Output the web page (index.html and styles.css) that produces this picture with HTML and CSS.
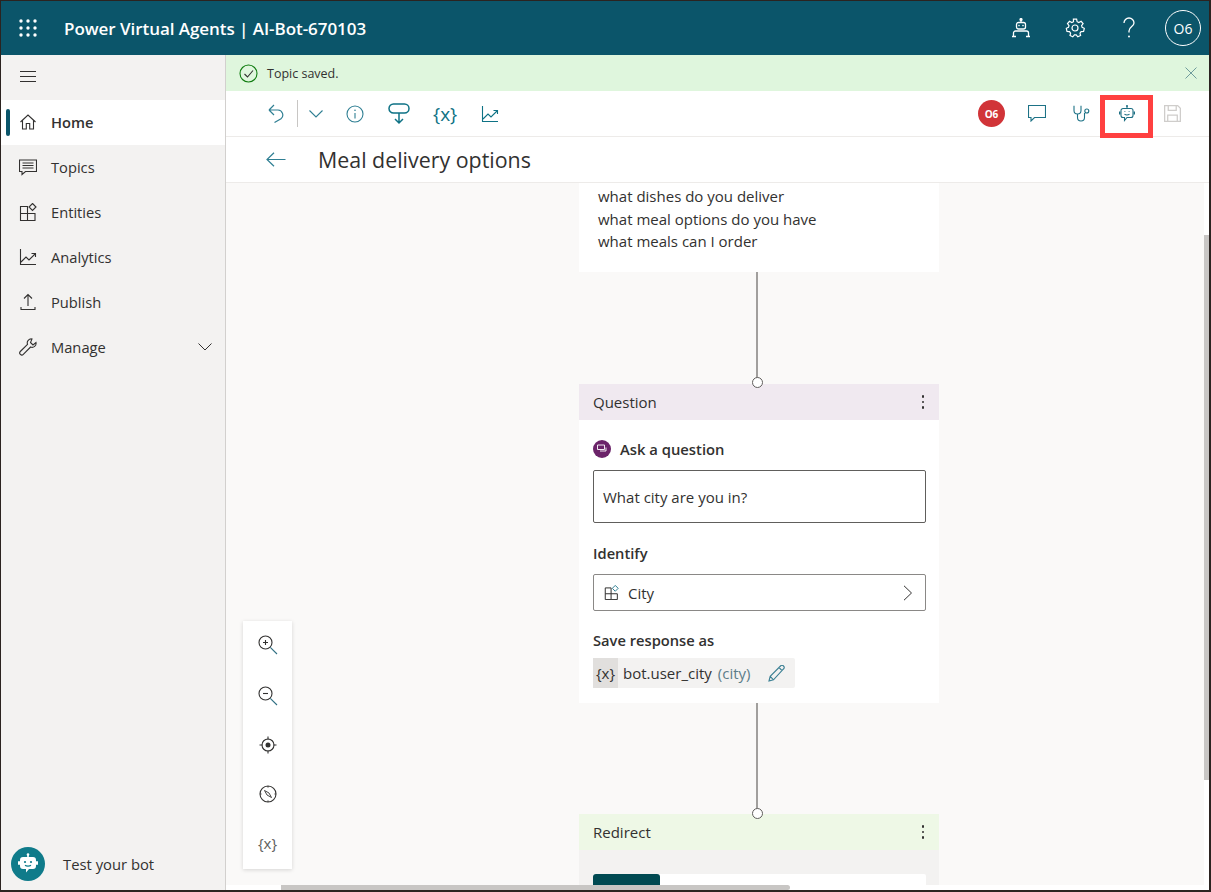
FILE: index.html
```html
<!DOCTYPE html>
<html lang="en">
<head>
  <meta charset="UTF-8" />
  <title>Power Virtual Agents | AI-Bot-670103</title>
  <link rel="stylesheet" href="styles.css">
</head>
<body>
  <div class="app">
    <header class="topbar">
      <svg class="waffle" width="18" height="18" viewBox="0 0 18 18" fill="#fff">
        <circle cx="2" cy="2" r="1.7"/><circle cx="9" cy="2" r="1.7"/><circle cx="16" cy="2" r="1.7"/>
        <circle cx="2" cy="9" r="1.7"/><circle cx="9" cy="9" r="1.7"/><circle cx="16" cy="9" r="1.7"/>
        <circle cx="2" cy="16" r="1.7"/><circle cx="9" cy="16" r="1.7"/><circle cx="16" cy="16" r="1.7"/>
      </svg>
      <div class="appTitle">Power Virtual Agents | AI-Bot-670103</div>
      <div class="topActions">
        <div class="topBtn">
          <svg width="20" height="20" viewBox="0 0 20 20" fill="none" stroke="#fff" stroke-width="1.3">
            <path d="M10 1v3"/><circle cx="10" cy="1.6" r="1" fill="#fff"/>
            <rect x="5.500" y="4.500" width="9" height="6.500" rx="2"/>
            <circle cx="8" cy="7.600" r=".8" fill="#fff" stroke="none"/><circle cx="12" cy="7.600" r=".8" fill="#fff" stroke="none"/>
            <path d="M2.500 18.500v-3.500a2 2 0 0 1 2-2h11a2 2 0 0 1 2 2v3.500M1 18.500h4M15 18.500h4"/>
          </svg>
        </div>
        <div class="topBtn">
          <svg width="20" height="20" viewBox="0 0 20 20" fill="none" stroke="#fff" stroke-width="1.2">
            <path d="M8.400 1.500h3.200l.5 2.500 1.700.8 2.300-1.200 2 2.300-1.500 2 .5 1.800 2.200.9v.1l-.7 3-2.500.2-1.100 1.500.6 2.400-2.800 1.300-1.600-1.900h-1.800l-1.600 1.900-2.800-1.300.6-2.400-1.100-1.500-2.500-.2-.7-3v-.1l2.200-.9.500-1.800-1.500-2 2-2.300 2.300 1.200 1.700-.8z" transform="translate(0 -.3)"/>
            <circle cx="10" cy="10" r="3"/>
          </svg>
        </div>
        <div class="topBtn">
          <svg width="14" height="22" viewBox="0 0 14 22" fill="none" stroke="#fff" stroke-width="1.3">
            <path d="M2 6a5 5 0 0 1 10 0c0 3.500-5 3.800-5 8v1.500"/><circle cx="7" cy="19.500" r="1" fill="#fff" stroke="none"/>
          </svg>
        </div>
        <div class="topBtn avatarSlot"><div class="avatar">O6</div></div>
      </div>
    </header>

    <div class="main">
      <nav class="sidebar">
        <div class="hamburger"><span></span><span></span><span></span></div>
        <a class="navItem active">
          <svg class="navIcon" width="18" height="18" viewBox="0 0 18 18" fill="none" stroke="#323130" stroke-width="1.100"><path d="M1.500 9 9 2l7.500 7M3.500 7.500V16h3.800v-5.500h3.400V16h3.800V7.500"/></svg>
          <span>Home</span>
        </a>
        <a class="navItem">
          <svg class="navIcon" width="18" height="18" viewBox="0 0 18 18" fill="none" stroke="#323130" stroke-width="1.100"><path d="M.5 2h17v11.500H6.500L3 16.500v-3H.5z"/><path d="M3.500 5h11M3.500 7.500h11M3.500 10h11"/></svg>
          <span>Topics</span>
        </a>
        <a class="navItem">
          <svg class="navIcon" width="18" height="18" viewBox="0 0 18 18" fill="none" stroke="#323130" stroke-width="1.100"><path d="M1.500 3.500h7v14h-7zM1.500 10.500h14.500v7H8.500"/><path d="M13.500.5l3.500 3.500-3.500 3.500L10 4z"/></svg>
          <span>Entities</span>
        </a>
        <a class="navItem">
          <svg class="navIcon" width="18" height="18" viewBox="0 0 18 18" fill="none" stroke="#323130" stroke-width="1.100"><path d="M1.500 1v15.500H17M2 14l5-5 3 3 6-6M12.500 5.500H16.500V9"/></svg>
          <span>Analytics</span>
        </a>
        <a class="navItem">
          <svg class="navIcon" width="18" height="18" viewBox="0 0 18 18" fill="none" stroke="#323130" stroke-width="1.100"><path d="M9 13V1.500M5 5.500l4-4 4 4M2 14v2.500h14V14"/></svg>
          <span>Publish</span>
        </a>
        <a class="navItem">
          <svg class="navIcon" width="18" height="18" viewBox="0 0 18 18" fill="none" stroke="#323130" stroke-width="1.100"><path d="M13 1a4 4 0 0 0-4.500 5.300L1.300 13.500a2 2 0 0 0 3 2.800l7.300-7.300A4 4 0 0 0 17 4.500l-3 2.500-2.500-2.500z"/></svg>
          <span>Manage</span>
          <svg class="navChevron" width="14" height="8" viewBox="0 0 14 8" fill="none" stroke="#323130" stroke-width="1"><path d="M.5.500 7 7l6.500-6.500"/></svg>
        </a>
        <div class="testBot">
          <div class="testBotIcon">
            <svg width="20" height="22" viewBox="0 0 20 22" fill="#fff">
              <rect x="9.200" y="1" width="1.600" height="3"/><circle cx="10" cy="1.500" r="1.300"/>
              <path d="M5 4h10a3 3 0 0 1 3 3v6a3 3 0 0 1-3 3h-4l-3 3.500V16H5a3 3 0 0 1-3-3V7a3 3 0 0 1 3-3z"/>
              <rect x="0" y="8" width="2" height="4" rx="1"/><rect x="18" y="8" width="2" height="4" rx="1"/>
              <circle cx="7" cy="9" r="1.100" fill="#0f7b8a"/><circle cx="13" cy="9" r="1.100" fill="#0f7b8a"/>
              <path d="M7 12.200c1.500 1.200 4.500 1.200 6 0" fill="none" stroke="#0f7b8a" stroke-width="1.100"/>
            </svg>
          </div>
          <span>Test your bot</span>
        </div>
      </nav>

      <section class="content">
        <div class="notice">
          <svg width="19" height="19" viewBox="0 0 19 19" fill="none" stroke-width="1.100"><circle cx="9.500" cy="9.500" r="8.500" stroke="#107c10"/><path d="M5.500 10l3 3 5.500-6.500" stroke="#323130"/></svg>
          <span class="noticeText">Topic saved.</span>
          <svg class="noticeClose" width="12" height="12" viewBox="0 0 12 12" stroke="#6f9c9c" stroke-width="1"><path d="M.5.500l11 11M11.500.500l-11 11"/></svg>
        </div>

        <div class="toolbar">
          <svg class="tool undo" width="16" height="19" viewBox="0 0 16 19" fill="none" stroke="#2f7f93" stroke-width="1.200"><path d="M1 6h9a5 5 0 0 1 3 8.800L6.500 18.500M1 6l5-5M1 6l5 5"/></svg>
          <div class="toolDivider"></div>
          <svg class="tool chev" width="14" height="8" viewBox="0 0 14 8" fill="none" stroke="#2f7f93" stroke-width="1.100"><path d="M.5.500 7 7l6.500-6.500"/></svg>
          <svg class="tool info" width="18" height="18" viewBox="0 0 18 18" fill="none" stroke="#2f7f93" stroke-width="1.100"><circle cx="9" cy="9" r="8"/><path d="M9 8v5.500"/><circle cx="9" cy="5.300" r=".8" fill="#2f7f93" stroke="none"/></svg>
          <svg class="tool branch" width="22" height="22" viewBox="0 0 22 22" fill="none" stroke="#0e7285" stroke-width="1.500"><rect x="1" y="1" width="20" height="9" rx="4.500"/><path d="M11 10v10M7 16l4 4 4-4"/></svg>
          <div class="tool vars">{x}</div>
          <svg class="tool chart" width="18" height="18" viewBox="0 0 18 18" fill="none" stroke="#0e7285" stroke-width="1.100"><path d="M1.500 1v15.500H17M2 14l5-5 3 3 6-6M12.500 5.500H16.500V9"/></svg>

          <div class="toolRight">
            <div class="badge">O6</div>
            <svg class="tool comment" width="18" height="17" viewBox="0 0 18 17" fill="none" stroke="#1d7286" stroke-width="1.100"><path d="M.5.500h17v12H6.500L3 16v-3.500H.5z"/></svg>
            <svg class="tool steth" width="17" height="17" viewBox="0 0 17 17" fill="none" stroke="#1d7286" stroke-width="1.100"><path d="M1 .8v4.700a3.500 3.500 0 0 0 7 0V.8M4.500 9v3.500a3.500 3.500 0 0 0 7 0V8"/><circle cx="13.800" cy="6" r="2"/></svg>
            <div class="testBtn">
              <svg width="16" height="18" viewBox="0 0 16 18" fill="none" stroke="#1d6f83" stroke-width="1.100"><path d="M8 .5v3"/><circle cx="8" cy="1" r=".9" fill="#1d6f83" stroke="none"/><path d="M4 3.500h8a2 2 0 0 1 2 2v5a2 2 0 0 1-2 2H8l-2.500 3v-3H4a2 2 0 0 1-2-2v-5a2 2 0 0 1 2-2z"/><path d="M.7 6.500v3M15.300 6.500v3" stroke-width="1.500"/><path d="M5.500 6.500h.8M9.700 6.500h.8M5.500 9.300c1.500.8 3.500.8 5 0"/></svg>
            </div>
            <svg class="tool save" width="17" height="17" viewBox="0 0 16 16" fill="none" stroke="#cfcdcb" stroke-width="1.200"><path d="M.6.600h12.300l2.500 2.500v12.300H.6z"/><path d="M4 .6v4.500h7.500V.6M3.500 15.400V9.500h9v5.900"/></svg>
          </div>
        </div>

        <div class="titleBar">
          <svg class="backArrow" width="20" height="15" viewBox="0 0 20 15" fill="none" stroke="#2f7f93" stroke-width="1.200"><path d="M19.500 7.500H1M8 .7 1 7.500l7 6.800"/></svg>
          <h1>Meal delivery options</h1>
        </div>

        <div class="canvas">
          <div class="node triggerNode">
            <div>what dishes do you deliver</div>
            <div>what meal options do you have</div>
            <div>what meals can I order</div>
          </div>

          <div class="link linkOne"></div>
          <div class="port portOne"></div>

          <div class="node questionNode">
            <div class="nodeHead questionHead">
              <span>Question</span>
              <div class="kebab"><i></i><i></i><i></i></div>
            </div>
            <div class="nodeBody">
              <div class="askRow">
                <div class="askIcon">
                  <svg width="10" height="10" viewBox="0 0 10 10" fill="none" stroke="#fff" stroke-width=".9"><path d="M.5 1h7v4.500h-7zM3 7h6V3.500"/></svg>
                </div>
                <span>Ask a question</span>
              </div>
              <div class="questionBox">What city are you in?</div>
              <div class="fieldLabel identifyLabel">Identify</div>
              <div class="selectBox">
                <svg width="15" height="15" viewBox="0 0 18 18" fill="none" stroke="#323130" stroke-width="1.200"><path d="M1.500 3.500h7v14h-7zM1.500 10.500h14.500v7H8.500"/><path d="M13.500.5l3.500 3.500-3.500 3.500L10 4z" stroke="#2f7f93"/></svg>
                <span>City</span>
                <svg class="selectChev" width="10" height="16" viewBox="0 0 10 16" fill="none" stroke="#323130" stroke-width="1"><path d="M1 .8 8.500 8 1 15.200"/></svg>
              </div>
              <div class="fieldLabel saveLabel">Save response as</div>
              <div class="varChip">
                <div class="varTag">{x}</div>
                <span class="varName">bot.user_city</span>
                <span class="varType">(city)</span>
                <svg class="varEdit" width="17" height="17" viewBox="0 0 17 17" fill="none" stroke="#3a7f93" stroke-width="1.100"><path d="M1 16l1.200-4.700L12.500 1a1.900 1.900 0 0 1 3 3L5.500 14.800zM2.200 11.300l3.300 3.500M11 2.500l3.300 3.300"/></svg>
              </div>
            </div>
          </div>

          <div class="link linkTwo"></div>
          <div class="port portTwo"></div>

          <div class="node redirectNode">
            <div class="nodeHead redirectHead">
              <span>Redirect</span>
              <div class="kebab"><i></i><i></i><i></i></div>
            </div>
            <div class="redirectBody">
              <div class="redirectBox"><div class="redirectTag"></div></div>
            </div>
          </div>

          <div class="zoomPanel">
            <svg width="20" height="20" viewBox="0 0 20 20" fill="none" stroke="#323130" stroke-width="1.100"><circle cx="7.500" cy="7.500" r="6.500"/><path d="M5 7.500h5M7.500 5v5"/><path d="M12.300 12.300l6.700 6.700" stroke="#2f6f83"/></svg>
            <svg width="20" height="20" viewBox="0 0 20 20" fill="none" stroke="#323130" stroke-width="1.100"><circle cx="7.500" cy="7.500" r="6.500"/><path d="M5 7.500h5"/><path d="M12.300 12.300l6.700 6.700" stroke="#2f6f83"/></svg>
            <svg width="18" height="18" viewBox="0 0 18 18" fill="none" stroke="#323130" stroke-width="1.100"><circle cx="9" cy="9" r="6"/><circle cx="9" cy="9" r="2.500" fill="#323130" stroke="none"/><path d="M9 .5v3M9 14.500v3M.5 9h3M14.500 9h3"/></svg>
            <svg width="18" height="18" viewBox="0 0 18 18" fill="none" stroke="#323130" stroke-width="1.100"><circle cx="9" cy="9" r="8"/><path d="M5.500 5.500 8 10l4.500 2.500L10 8z" stroke-width=".9"/><path d="M9 1v1.500M9 15.500V17M1 9h1.500M15.500 9H17"/></svg>
            <div class="zoomVars">{x}</div>
          </div>

          <div class="trackH"><div class="scrollH"></div></div>
          <div class="trackV"><div class="scrollV"></div></div>
        </div>
      </section>
    </div>
  </div>
</body>
</html>
```

FILE: styles.css
```css
/* Base */
* {
  box-sizing: border-box;
}

html,
body {
  margin: 0;
  height: 892px;
  overflow: hidden;
  background: #fff;
  color: #323130;
  font-family: "Open Sans", "Noto Sans", Arial, sans-serif;
  font-size: 15px;
}

.app {
  display: flex;
  flex-direction: column;
  width: 1211px;
  height: 892px;
  border-style: solid;
  border-color: #2b2320;
  border-width: 1px 2px 2px 1px;
}

/* Top bar */
.topbar {
  display: flex;
  align-items: center;
  flex: 0 0 54px;
  padding-left: 18px;
  background: #0b556a;
  color: #fff;
}

.appTitle {
  margin-left: 27px;
  font-size: 17px;
  font-weight: 600;
  letter-spacing: -0.05px;
  white-space: nowrap;
}

.topActions {
  display: flex;
  align-items: center;
  margin-left: auto;
}

.topBtn {
  display: flex;
  align-items: center;
  justify-content: center;
  width: 54px;
}

.avatarSlot {
  width: 52px;
  margin-left: 1px;
}

.avatar {
  display: flex;
  align-items: center;
  justify-content: center;
  width: 36px;
  height: 36px;
  border: 1px solid #fff;
  border-radius: 50%;
  font-size: 14px;
}

/* Sidebar */
.main {
  display: flex;
  flex: 1;
  min-height: 0;
}

.sidebar {
  display: flex;
  flex-direction: column;
  flex: 0 0 225px;
  background: #f3f2f1;
  border-right: 1px solid #d2d0ce;
}

.hamburger {
  display: flex;
  flex-direction: column;
  justify-content: center;
  gap: 4px;
  height: 45px;
  padding: 0 0 3px 19px;
}

.hamburger span {
  display: block;
  width: 16px;
  height: 1px;
  background: #323130;
}

.navItem {
  position: relative;
  display: flex;
  align-items: center;
  height: 45px;
  padding: 0 0 2px 18px;
  font-size: 14.700px;
}

.navItem.active {
  background: #fff;
  font-weight: 600;
}

.navItem.active::before {
  content: "";
  position: absolute;
  left: 5px;
  top: 9px;
  width: 4px;
  height: 27px;
  border-radius: 2px;
  background: #0b556a;
}

.navIcon {
  flex: none;
  margin-right: 14px;
}

.navChevron {
  margin-left: auto;
  margin-right: 13px;
}

.testBot {
  display: flex;
  align-items: center;
  gap: 18px;
  margin-top: auto;
  padding: 0 0 9px 10px;
  font-size: 14.800px;
}

.testBotIcon {
  display: flex;
  align-items: center;
  justify-content: center;
  width: 34px;
  height: 34px;
  border-radius: 50%;
  background: #0f7b8a;
}

/* Content column */
.content {
  display: flex;
  flex-direction: column;
  flex: 1;
  min-width: 0;
}

.notice {
  display: flex;
  align-items: center;
  flex: 0 0 36px;
  padding: 0 12px 0 13px;
  background: #dff6dd;
}

.noticeText {
  margin-left: 9px;
  font-size: 12.500px;
}

.noticeClose {
  margin-left: auto;
}

.toolbar {
  display: flex;
  align-items: center;
  flex: 0 0 46px;
  min-height: 0;
  padding: 0 28px 0 42px;
  border-bottom: 1px solid #edebe9;
}

.tool {
  flex: none;
}

.toolDivider {
  width: 1px;
  height: 27px;
  margin: 0 11px 0 13px;
  background: #c8c6c4;
}

.chev {
  margin-right: 23px;
}

.info {
  margin-right: 24px;
}

.branch {
  margin-right: 23px;
}

.vars {
  margin-right: 24px;
  color: #0e7285;
  font-size: 19px;
}

.toolRight {
  display: flex;
  align-items: center;
  margin-left: auto;
}

.badge {
  display: flex;
  align-items: center;
  justify-content: center;
  width: 27px;
  height: 27px;
  margin-right: 23px;
  border-radius: 50%;
  background: #d13438;
  color: #fff;
  font-size: 10px;
  font-weight: 700;
}

.comment {
  margin-right: 27px;
}

.steth {
  margin-right: 10px;
}

/* the red highlight sits a little low over the toolbar rule */
.testBtn {
  display: flex;
  align-items: center;
  justify-content: center;
  width: 53px;
  height: 43px;
  margin: 5px 11px 0 0;
  padding-bottom: 5px;
  border: 5px solid #ff4040;
}

.titleBar {
  display: flex;
  align-items: center;
  flex: 0 0 46px;
  padding-left: 40px;
  border-bottom: 1px solid #edebe9;
}

.titleBar h1 {
  margin: 0 0 0 32px;
  font-size: 21.400px;
  font-weight: 400;
}

/* Canvas: nodes sit at their own spot on the free canvas */
.canvas {
  position: relative;
  flex: 1;
  overflow: hidden;
  background: #faf9f8;
}

.node {
  position: absolute;
  left: 353px;
  width: 360px;
  background: #fff;
}

.triggerNode {
  top: 0;
  height: 89px;
  padding: 2px 19px 0;
  line-height: 22.500px;
}

.questionNode {
  top: 201px;
  height: 319px;
}

.redirectNode {
  top: 631px;
  height: 80px;
  overflow: hidden;
}

.link {
  position: absolute;
  left: 530px;
  width: 2px;
  background: #a19f9d;
}

.linkOne {
  top: 89px;
  height: 107px;
}

.linkTwo {
  top: 520px;
  height: 106px;
}

.port {
  position: absolute;
  z-index: 2;
  left: 526px;
  width: 11px;
  height: 11px;
  border: 1px solid #605e5c;
  border-radius: 50%;
  background: #fff;
}

.portOne {
  top: 194px;
}

.portTwo {
  top: 625px;
}

.nodeHead {
  display: flex;
  align-items: center;
  justify-content: space-between;
  height: 36px;
  padding: 0 15px 0 14px;
}

.questionHead {
  background: #f0e9f0;
}

.redirectHead {
  background: #eef8e6;
}

.kebab {
  display: flex;
  flex-direction: column;
  gap: 3px;
}

.kebab i {
  display: block;
  width: 2.500px;
  height: 2.500px;
  border-radius: 50%;
  background: #323130;
}

.nodeBody {
  padding: 19px 13px 0 14px;
  line-height: 20px;
}

.askRow {
  display: flex;
  align-items: center;
  gap: 9px;
  font-size: 14.800px;
  font-weight: 600;
}

.askIcon {
  display: flex;
  align-items: center;
  justify-content: center;
  width: 18px;
  height: 18px;
  border-radius: 50%;
  background: #6b2369;
}

.questionBox {
  display: flex;
  align-items: center;
  height: 53px;
  margin-top: 11px;
  padding-left: 9px;
  border: 1px solid #605e5c;
  border-radius: 2px;
}

.fieldLabel {
  font-size: 14.700px;
  font-weight: 600;
}

.identifyLabel {
  margin-top: 20px;
}

.selectBox {
  display: flex;
  align-items: center;
  gap: 9px;
  height: 37px;
  margin-top: 11px;
  padding: 0 12px 0 10px;
  border: 1px solid #8a8886;
  border-radius: 2px;
}

.selectChev {
  margin-left: auto;
}

.saveLabel {
  margin-top: 19px;
}

.varChip {
  display: flex;
  align-items: center;
  width: 202px;
  height: 30px;
  margin-top: 8px;
  border-radius: 2px;
  background: #f3f2f1;
}

.varTag {
  display: flex;
  align-items: center;
  justify-content: center;
  width: 25px;
  height: 30px;
  background: #e1dfdd;
}

.varName {
  margin-left: 5px;
}

.varType {
  margin-left: 6px;
  color: #5c7d8a;
}

.varEdit {
  margin-left: auto;
  margin-right: 10px;
}

.redirectBody {
  height: 100%;
  padding: 24px 13px 0 14px;
  background: #f3f2f1;
}

.redirectBox {
  height: 40px;
  border-radius: 2px;
  background: #fff;
}

.redirectTag {
  width: 67px;
  height: 40px;
  border-radius: 3px 3px 0 0;
  background: #014a52;
}

/* Zoom controls */
.zoomPanel {
  position: absolute;
  left: 17px;
  top: 438px;
  display: flex;
  flex-direction: column;
  align-items: center;
  justify-content: space-between;
  width: 49px;
  height: 248px;
  padding: 14px 0 16px;
  background: #fff;
  box-shadow: 0 1px 4px rgba(0, 0, 0, 0.15);
}

.zoomVars {
  font-size: 15px;
  line-height: 20px;
  color: #605e5c;
}

/* Scrollbars */
.trackH {
  position: absolute;
  left: 0;
  right: 0;
  bottom: 0;
  height: 5px;
  padding-left: 55px;
  background: #fff;
}

.scrollH {
  width: 509px;
  height: 5px;
  border-radius: 0 3px 3px 0;
  background: #c8c6c4;
}

.trackV {
  position: absolute;
  top: 0;
  right: 0;
  bottom: 5px;
  width: 5px;
  padding-top: 52px;
  background: #fff;
}

.scrollV {
  width: 5px;
  height: 545px;
  background: #c8c6c4;
}
```
